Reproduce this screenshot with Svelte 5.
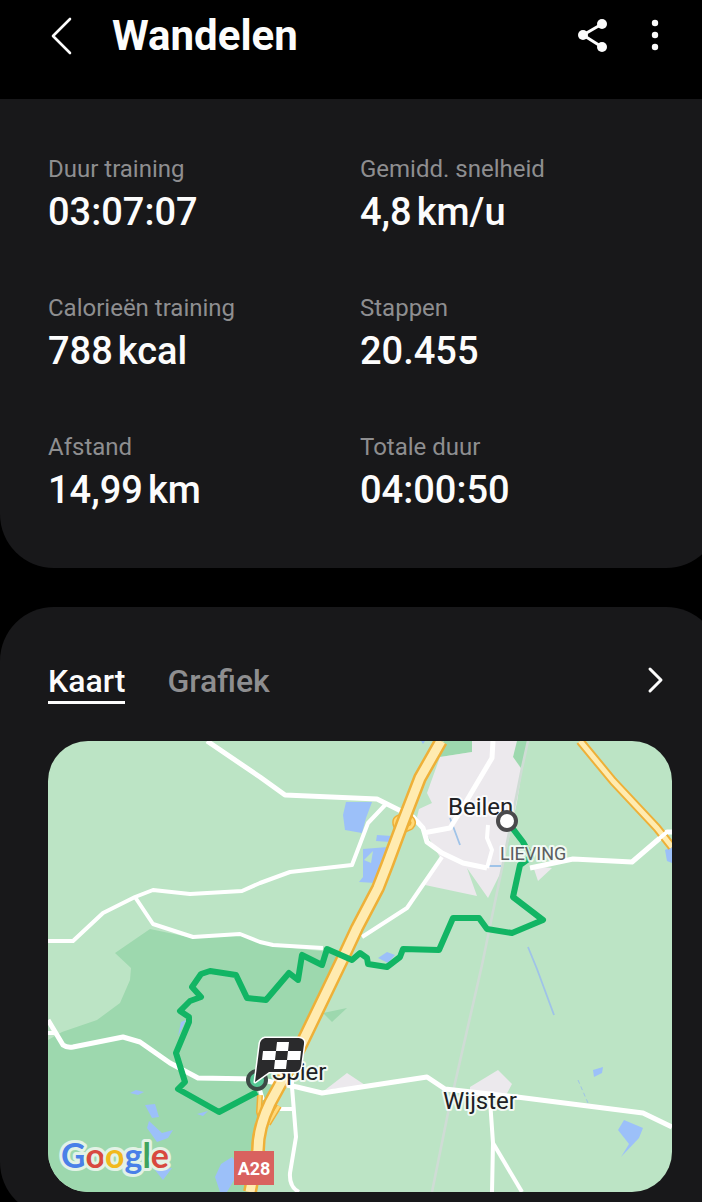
<script lang="ts">
	interface Stat {
		label: string;
		value: string;
		unit?: string;
	}

	interface Place {
		name: string;
		x: number;
		y: number;
		small?: boolean;
	}

	const stats: Stat[] = [
		{ label: 'Duur training', value: '03:07:07' },
		{ label: 'Gemidd. snelheid', value: '4,8', unit: 'km/u' },
		{ label: 'Calorieën training', value: '788', unit: 'kcal' },
		{ label: 'Stappen', value: '20.455' },
		{ label: 'Afstand', value: '14,99', unit: 'km' },
		{ label: 'Totale duur', value: '04:00:50' }
	];

	const tabs = ['Kaart', 'Grafiek'];

	let active = $state('Kaart');

	const places: Place[] = [
		{ name: 'Beilen', x: 448, y: 815 },
		{ name: 'LIEVING', x: 500, y: 860, small: true },
		{ name: 'Spier', x: 272, y: 1080 },
		{ name: 'Wijster', x: 443, y: 1109 }
	];

	const forest = [
		'M115 953L150 929L193 938L240 935L273 946L340 953L302 1043L270 1103L250 1192H48V1040L62 1032L97 1020L120 1003L130 980L131 968Z',
		'M323 1013L347 1008L332 1022Z',
		'M444 741H472V752L440 757Z',
		'M515 741H528L522 769L513 757Z'
	];

	const urban = [
		'M440 757L472 752V741H517L513 757L522 770L517 802L502 870L488 898L467 868L477 896L425 885L441 859L423 828L417 817L419 809L432 803L427 793Z',
		'M533 866L538 881L552 868Z',
		'M325 1090L347 1073L365 1085Z',
		'M470 1087L498 1070L512 1084L505 1097H470Z'
	];

	const water = [
		'M346 802H372L366 818L362 833L345 830L343 815Z',
		'M377 835L392 836L390 842L376 841Z',
		'M363 849L388 847L375 883L359 882L363 877Z',
		'M378 958L387 952L395 955L388 963Z',
		'M130 1093L136 1090L144 1092L138 1095Z',
		'M145 1105L155 1104L159 1117L152 1118Z',
		'M149 1121L162 1133L173 1130L168 1138L157 1142L147 1128Z',
		'M197 1114L208 1111L203 1116Z',
		'M215 1177L221 1164L232 1157L240 1170L227 1192H220Z',
		'M155 1170L172 1168L163 1180Z',
		'M181 1022L186 1020L178 1036Z',
		'M593 1070L603 1067L602 1073L594 1077Z',
		'M624 1120L643 1128L639 1138L621 1157L629 1144L618 1130Z',
		'M665 850L672 847V863L667 861Z',
		'M421 741H425L423 744Z'
	];

	const minorRoads = [
		'M48 941H73L103 913L135 897L153 890L190 894L242 891L260 883L290 872L352 865L368 823L386 804',
		'M135 897L153 924L193 937L240 934L260 942L273 945L323 948',
		'M442 857L407 908L362 937',
		'M48 1033H55',
		'M292 1075V1087L296 1137L290 1173Q289 1187 299 1192',
		'M270 1109H293',
		'M257 1080L263 1100',
		'M490 1100L493 1143L492 1192',
		'M493 1143L522 1192',
		'M488 825L487 838L492 850L487 868'
	];

	const roads = [
		'M207 741L260 777L285 795L377 799L413 817L423 828L427 842L442 853L463 863L487 868',
		'M423 833L450 828L460 812L473 790L492 758L493 741',
		'M530 868L573 859L632 862L667 832H672',
		'M48 1020L63 1045Q67 1048 73 1047L123 1037L140 1042L170 1063L198 1078L257 1079L297 1087L322 1093L427 1077L445 1089L517 1097L643 1113L672 1127'
	];

	const ramps =
		'M401 817Q393 818 396 826Q399 832 404 829M409 817Q416 822 411 827L404 830M260 1095L259 1112L263 1125M279 1106L268 1124';
	const highway =
		'M441 741L420 778L403 822L387 865L378 888L357 928L343 958L302 1043L288 1070L270 1103Q258 1128 258 1150L250 1192';
	const provincial = 'M580 741L613 781L657 828L672 847';

	const route =
		'M507 821L523 842L531 857L520 865L513 897L543 920L512 933L487 929L479 918L453 918L439 950L403 949L400 957L387 967L368 964L367 958L360 953L352 960L327 949L322 965L302 955L298 980L289 973L266 1000L247 998L236 975L210 971L201 974L192 987L201 997L190 1001L180 1011L189 1017V1022L176 1053L185 1082L178 1089L219 1112L257 1092';
</script>

<div class="screen">
	<header>
		<button class="icon" aria-label="Terug">
			<svg width="24" height="40" viewBox="0 0 24 40">
				<path class="line" d="M21 3L4 20L21 37" />
			</svg>
		</button>
		<h1>Wandelen</h1>
		<button class="icon share" aria-label="Delen">
			<svg width="32" height="40" viewBox="0 0 32 40">
				<path class="line thick" d="M25 8L6 19L25 31" />
				<circle cx="25" cy="8" r="5" />
				<circle cx="6" cy="19" r="5" />
				<circle cx="25" cy="31" r="5" />
			</svg>
		</button>
		<button class="icon" aria-label="Meer opties">
			<svg width="12" height="40" viewBox="0 0 12 40">
				<circle cx="6" cy="7" r="3.2" />
				<circle cx="6" cy="19" r="3.2" />
				<circle cx="6" cy="31" r="3.2" />
			</svg>
		</button>
	</header>

	<main>
		<section class="card summary">
			<dl>
				{#each stats as stat}
					<div>
						<dt>{stat.label}</dt>
						<dd>
							{stat.value}{#if stat.unit}<span class="unit">{stat.unit}</span>{/if}
						</dd>
					</div>
				{/each}
			</dl>
		</section>

		<section class="card detail">
			<div class="bar">
				<div class="tabs" role="tablist">
					{#each tabs as tab}
						<button
							role="tab"
							aria-selected={tab === active}
							onclick={() => (active = tab)}
						>
							{tab}
						</button>
					{/each}
				</div>
				<button class="icon" aria-label="Details">
					<svg width="20" height="38" viewBox="0 0 20 38">
						<path class="line thick" d="M4 8L15 19L4 30" />
					</svg>
				</button>
			</div>

			<svg class="map" viewBox="48 741 624 451" aria-label="Kaart">
				<rect class="land" x="48" y="741" width="624" height="451" />
				{#each forest as d}<path class="forest" {d} />{/each}
				{#each urban as d}<path class="urban" {d} />{/each}
				{#each water as d}<path class="water" {d} />{/each}
				<path class="land" d="M364 860L373 851L371 863Z" />
				<path class="stream" d="M528 947L537 969L554 1015M450 818L460 845M488 866H501" />
				<path class="stream faint" d="M578 1080L588 1103" />
				<path class="railway" d="M528 741L522 768L502 868L482 965L455 1083L448 1113L432 1192" />

				{#each minorRoads as d}<path class="road minor" {d} />{/each}
				{#each roads as d}<path class="road" {d} />{/each}

				<path class="casing ramp" d={ramps} />
				<path class="fill ramp" d={ramps} />
				<path class="casing small" d={provincial} />
				<path class="fill small" d={provincial} />
				<path class="road minor" d="M655 842L667 832H672" />
				<path class="casing" d={highway} />
				<path class="fill" d={highway} />

				<path class="route" d={route} />

				{#each places as place}
					<text class="place" class:small={place.small} x={place.x} y={place.y}>
						{place.name}
					</text>
				{/each}

				<rect class="shield" x="234" y="1151" width="40" height="34" />
				<text class="shield-text" x="254" y="1175" text-anchor="middle">A28</text>

				<circle class="start" cx="507" cy="821" r="9" />
				<circle class="finish" cx="257" cy="1080" r="9" />

				<path
					class="flag"
					d="M265 1038H299Q305 1039 304 1044L301 1066Q300 1072 294 1072H269L255 1082L260 1043Q261 1039 265 1038Z"
				/>
				<path
					class="check"
					d="M277 1042H289L288 1051H276ZM263 1051H276L275 1060H262ZM288 1051H301L300 1060H287ZM275 1060H287L286 1069H274Z"
				/>

				<text class="logo" x="61" y="1168"
					><tspan class="blue">G</tspan><tspan class="red">o</tspan><tspan class="yellow">o</tspan
					><tspan class="blue">g</tspan><tspan class="green">l</tspan><tspan class="red">e</tspan
				></text>
			</svg>
		</section>
	</main>
</div>

<style>
	:global(body) {
		margin: 0;
		background: #000;
	}

	.screen {
		height: 100vh;
		overflow: hidden auto;
		scrollbar-width: none;
		background: #000;
		color: #fcfcfc;
		font-family: Roboto, 'Noto Sans', sans-serif;
	}

	button {
		padding: 0;
		border: none;
		background: none;
		color: inherit;
		font: inherit;
		cursor: pointer;
	}

	.icon svg {
		display: block;
		fill: currentColor;
	}

	.line {
		fill: none;
		stroke: currentColor;
		stroke-width: 2.6;
		stroke-linecap: round;
		stroke-linejoin: round;

		&.thick {
			stroke-width: 3;
		}
	}

	header {
		display: flex;
		align-items: center;
		height: 72px;
		padding: 0 41px 27px 49px;
	}

	h1 {
		flex: 1;
		margin: 0 0 0 39px;
		font-size: 42px;
		font-weight: 700;
		line-height: 48px;
	}

	.share {
		margin-right: 40px;
	}

	/* the cards run a little past the right edge of the screen */
	main {
		display: flex;
		flex-direction: column;
		gap: 39px;
		margin-right: -18px;
	}

	.card {
		padding: 54px 48px 50px;
		border-radius: 54px;
		background: #18181a;
	}

	.summary {
		border-top-left-radius: 0;
		border-top-right-radius: 0;
	}

	.detail {
		padding-bottom: 24px;
	}

	dl {
		display: grid;
		grid-template-columns: 1fr 1fr;
		row-gap: 52px;
		margin: 0;
	}

	dt {
		color: #8e8e90;
		font-size: 24px;
		line-height: 32px;
	}

	dd {
		margin: 0;
		font-size: 38px;
		font-weight: 500;
		line-height: 55px;
	}

	.unit {
		margin-left: 5px;
	}

	.bar {
		display: flex;
		align-items: flex-start;
		justify-content: space-between;
		padding-right: 6px;
		margin-bottom: 37px;
	}

	.tabs {
		display: flex;
		gap: 42px;

		button {
			border-bottom: 3px solid transparent;
			color: #8e8e90;
			font-size: 32px;
			font-weight: 500;
			line-height: 40px;
		}

		button[aria-selected='true'] {
			border-color: #fcfcfc;
			color: #fcfcfc;
		}
	}

	.map {
		display: block;
		width: 100%;
		border-radius: 40px;

		path {
			stroke-linejoin: round;
		}
	}

	.land {
		fill: #bce4c5;
	}

	.forest {
		fill: #9dd8ae;
	}

	.urban {
		fill: #ece9ed;
	}

	.water {
		fill: #9cc0f9;
	}

	.stream {
		fill: none;
		stroke: #9fc3e8;
		stroke-width: 1.8;

		&.faint {
			stroke-dasharray: 4 3;
			stroke-width: 1;
		}
	}

	.railway {
		fill: none;
		stroke: #cfdcd5;
		stroke-width: 2.6;
	}

	.road {
		fill: none;
		stroke: #fff;
		stroke-width: 5;

		&.minor {
			stroke-width: 4;
		}
	}

	.casing {
		fill: none;
		stroke: #eeb038;
		stroke-width: 14;

		&.small {
			stroke-width: 9;
		}

		&.ramp {
			stroke-width: 6;
		}
	}

	.fill {
		fill: none;
		stroke: #ffebb0;
		stroke-width: 9;

		&.small {
			stroke-width: 5;
		}

		&.ramp {
			stroke: #ffd978;
			stroke-width: 3;
		}
	}

	.route {
		fill: none;
		stroke: #12b564;
		stroke-width: 6;
	}

	.place {
		fill: #202124;
		stroke: #fff;
		stroke-opacity: 0.8;
		stroke-width: 4;
		stroke-linejoin: round;
		paint-order: stroke;
		font-size: 24px;

		&.small {
			fill: #5b5e61;
			font-size: 18px;
		}
	}

	.shield {
		fill: #d9625f;
	}

	.shield-text {
		fill: #fff;
		font-size: 18px;
		font-weight: 700;
	}

	.start {
		fill: #fff;
		stroke: #4a4a4c;
		stroke-width: 4;
	}

	.finish {
		fill: #56c795;
		stroke: #3c4a45;
		stroke-width: 4;
	}

	.flag {
		fill: #2a2a2c;
		stroke: #fff;
		stroke-width: 3;
		paint-order: stroke;
	}

	.check {
		fill: #fff;
	}

	.logo {
		stroke: #e3f2e6;
		stroke-width: 6;
		stroke-linejoin: round;
		paint-order: stroke;
		font-family: Lato, sans-serif;
		font-size: 34px;
		font-weight: 700;
	}

	.blue {
		fill: #4a80e8;
	}

	.red {
		fill: #d8483f;
	}

	.yellow {
		fill: #f2b91d;
	}

	.green {
		fill: #3fa35c;
	}
</style>
